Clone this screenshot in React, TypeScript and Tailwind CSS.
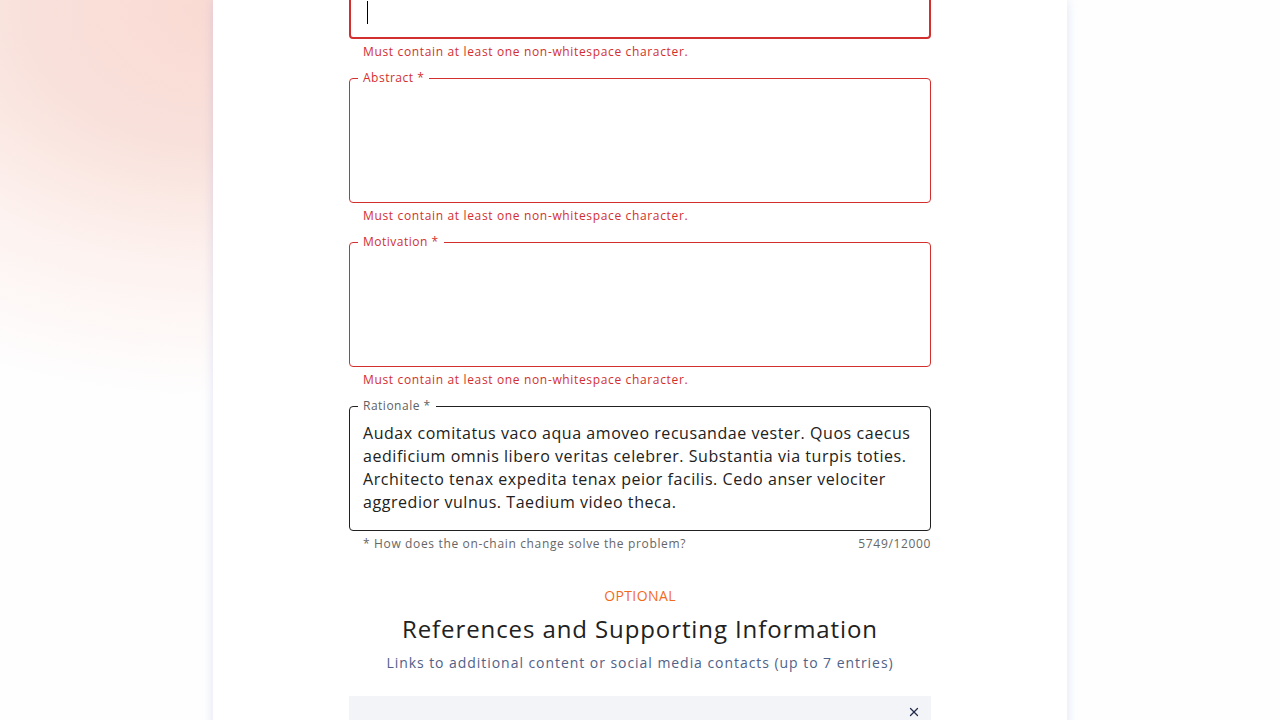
import React from 'react';
import { X } from 'lucide-react';

const font = { fontFamily: '"Open Sans", "DejaVu Sans", sans-serif' };

interface FieldProps {
  label?: string;
  error?: boolean;
  focused?: boolean;
  helper: string;
  counter?: string;
  children?: React.ReactNode;
}

const Field: React.FC<FieldProps> = ({ label, error, focused, helper, counter, children }) => {
  const border = error
    ? focused
      ? 'border-2 border-[#d32f2f]'
      : 'border border-[#d32f2f]'
    : 'border border-[#212121]';
  return (
    <div className="flex flex-col">
      <div className={`relative h-[125px] rounded-[4px] ${border}`}>
        {label && (
          <span
            className={`absolute -top-[9px] left-[8px] bg-white px-[5px] text-[12px] leading-[16px] tracking-[0.5px] ${
              error ? 'text-[#d32f2f]' : 'text-[#5f5f5f]'
            }`}
          >
            {label}
          </span>
        )}
        {children}
      </div>
      <div
        className={`mt-[3px] flex justify-between pl-[14px] text-[12px] leading-[20px] tracking-[0.65px] ${
          error ? 'text-[#d32f2f]' : 'text-[#666666]'
        }`}
      >
        <span>{helper}</span>
        {counter && <span>{counter}</span>}
      </div>
    </div>
  );
};

const rationale = [
  'Audax comitatus vaco aqua amoveo recusandae vester. Quos caecus',
  'aedificium omnis libero veritas celebrer. Substantia via turpis toties.',
  'Architecto tenax expedita tenax peior facilis. Cedo anser velociter',
  'aggredior vulnus. Taedium video theca.',
];

const msg = 'Must contain at least one non-whitespace character.';

export default function App() {
  return (
    <div
      className="relative h-[720px] overflow-hidden bg-[radial-gradient(ellipse_560px_390px_at_220px_10px,#fadad3_0%,#f9e1db_35%,#fdf2ef_65%,#fefefe_100%)]"
      style={font}
    >
      <div className="mx-auto flex min-h-[720px] w-[854px] flex-col bg-white pb-[200px] shadow-[0_0_10px_rgba(120,130,220,0.22)]">
        <div className="mx-auto -mt-[86px] flex w-[582px] flex-col gap-[16px]">
          <Field error focused helper={msg}>
            <span className="absolute bottom-[13px] left-[16px] h-[23px] w-px bg-black" />
          </Field>
          <Field label="Abstract *" error helper={msg} />
          <Field label="Motivation *" error helper={msg} />
          <Field
            label="Rationale *"
            helper="* How does the on-chain change solve the problem?"
            counter="5749/12000"
          >
            <div className="px-[13px] pt-[15px] text-[16px] leading-[23px] tracking-[0.55px] text-[#212121]">
              {rationale.map((l) => (
                <div key={l} className="whitespace-nowrap">
                  {l}
                </div>
              ))}
            </div>
          </Field>
        </div>

        <div className="mt-[32px] flex flex-col items-center">
          <p className="text-[14px] font-medium leading-[20px] tracking-[0.4px] text-[#f26b1d]">OPTIONAL</p>
          <h2 className="mt-[7px] text-[24px] leading-[32px] tracking-[0.9px] text-[#212121]">
            References and Supporting Information
          </h2>
          <p className="mt-[8px] text-[14px] font-medium leading-[20px] tracking-[0.95px] text-[#506288]">
            Links to additional content or social media contacts (up to 7 entries)
          </p>
        </div>

        <div className="mx-auto mt-[23px] flex h-[120px] w-[582px] justify-end bg-[#f3f4f8] pr-[10px] pt-[9px]">
          <X size={14} strokeWidth={2.2} className="text-[#242a4b]" />
        </div>
      </div>
    </div>
  );
}
